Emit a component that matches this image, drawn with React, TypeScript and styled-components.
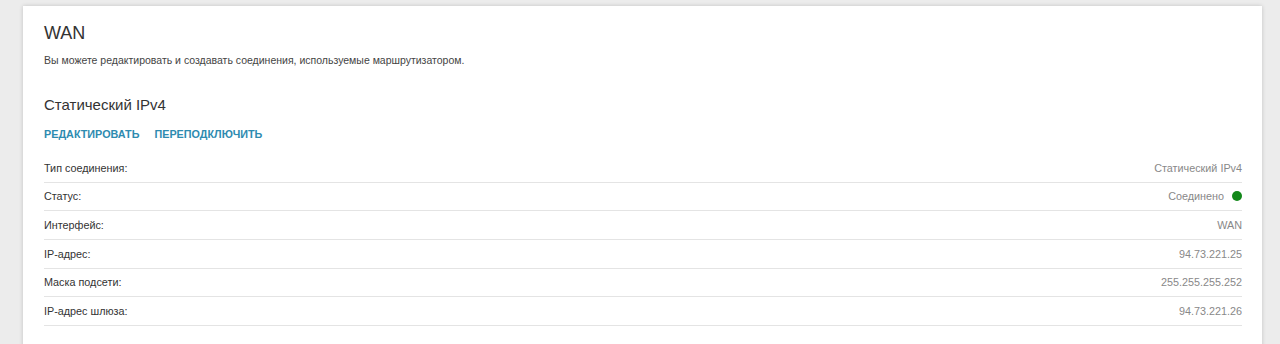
import styled, { createGlobalStyle } from 'styled-components';

const GlobalStyle = createGlobalStyle`
  html, body {
    margin: 0;
    padding: 0;
    background: #ececec;
  }
  body {
    font-family: "Liberation Sans", Arial, sans-serif;
  }
`;

const rows = [
  { label: 'Тип соединения:', value: 'Статический IPv4' },
  { label: 'Статус:', value: 'Соединено', status: true },
  { label: 'Интерфейс:', value: 'WAN' },
  { label: 'IP-адрес:', value: '94.73.221.25' },
  { label: 'Маска подсети:', value: '255.255.255.252' },
  { label: 'IP-адрес шлюза:', value: '94.73.221.26' },
];

export default function App() {
  return (
    <>
      <GlobalStyle />
      <Page>
        <Card>
          <Title>WAN</Title>
          <Description>
            Вы можете редактировать и создавать соединения, используемые маршрутизатором.
          </Description>
          <Subtitle>Статический IPv4</Subtitle>
          <Actions>
            <ActionLink href="#">РЕДАКТИРОВАТЬ</ActionLink>
            <ActionLink href="#">ПЕРЕПОДКЛЮЧИТЬ</ActionLink>
          </Actions>
          <InfoList>
            {rows.map((r) => (
              <InfoRow key={r.label}>
                <Label>{r.label}</Label>
                <Value>
                  {r.value}
                  {r.status && <StatusDot />}
                </Value>
              </InfoRow>
            ))}
          </InfoList>
        </Card>
      </Page>
    </>
  );
}

const Page = styled.div`
  padding: 6px 18px 0 23px;
  height: 344px;
  box-sizing: border-box;
  overflow: hidden;
`;

const Card = styled.section`
  background: #fff;
  box-shadow: 0 0 4px rgba(0, 0, 0, 0.18);
  padding: 16px 20px 40px 21px;
  min-height: 400px;
  box-sizing: border-box;
`;

const Title = styled.h1`
  margin: 0;
  font-size: 18px;
  font-weight: normal;
  line-height: 22px;
  color: #333;
`;

const Description = styled.p`
  margin: 9px 0 0;
  font-size: 10.5px;
  line-height: 14px;
  color: #444;
`;

const Subtitle = styled.h2`
  margin: 28px 0 0;
  font-size: 15px;
  font-weight: normal;
  line-height: 20px;
  color: #333;
`;

const Actions = styled.div`
  display: flex;
  gap: 15px;
  margin-top: 12px;
`;

const ActionLink = styled.a`
  font-size: 10.8px;
  font-weight: bold;
  line-height: 14px;
  color: #2e8bb0;
  text-decoration: none;
`;

const InfoList = styled.div`
  margin-top: 13px;
`;

const InfoRow = styled.div`
  display: flex;
  align-items: center;
  justify-content: space-between;
  height: 28.67px;
  box-sizing: border-box;
  border-bottom: 1px solid #e4e4e4;
  font-size: 10.8px;
`;

const Label = styled.span`
  color: #333;
`;

const Value = styled.span`
  display: flex;
  align-items: center;
  gap: 8px;
  color: #888;
`;

const StatusDot = styled.span`
  width: 10px;
  height: 10px;
  border-radius: 50%;
  background: #12881a;
`;
